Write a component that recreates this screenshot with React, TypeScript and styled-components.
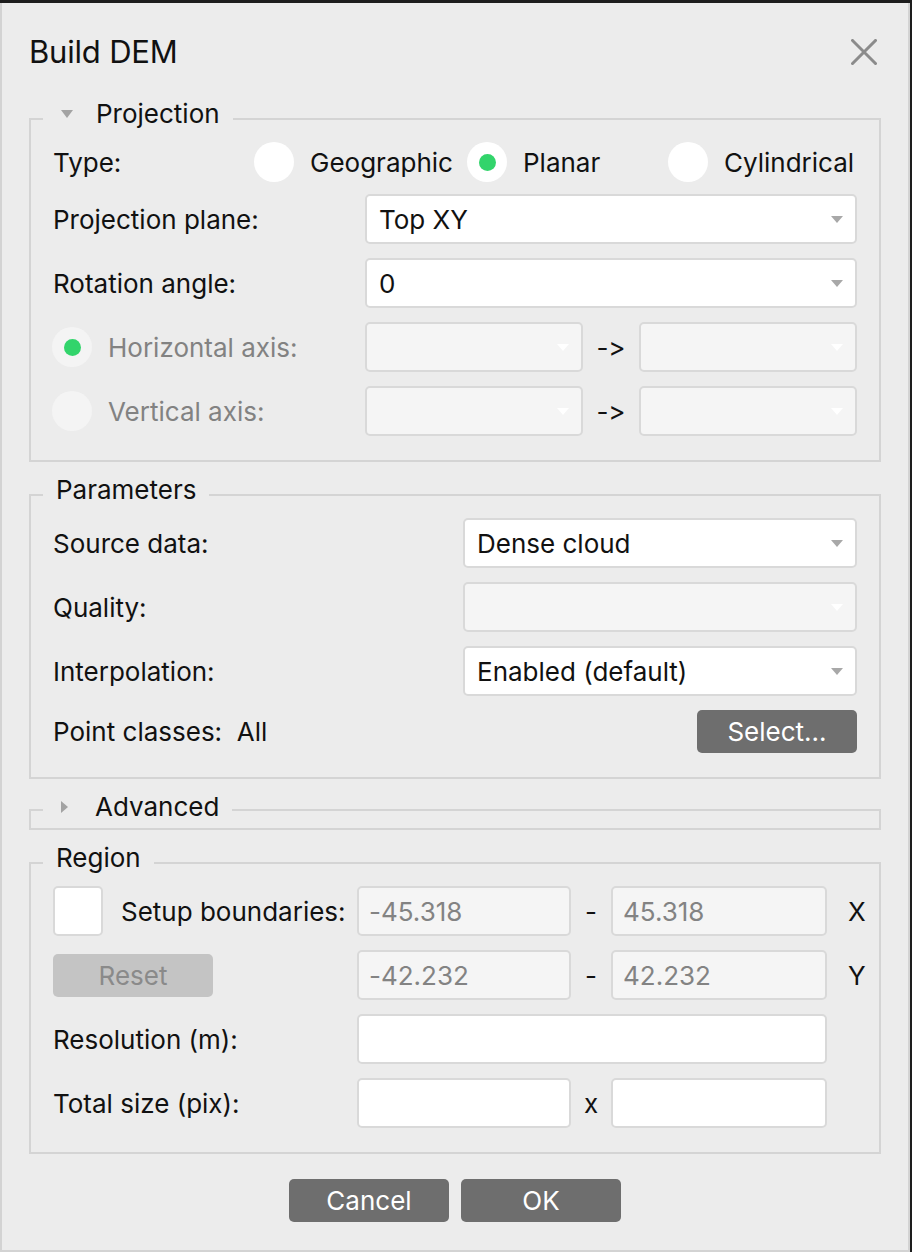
import { FunctionComponent } from "react"
import styled, { createGlobalStyle } from "styled-components"

const GlobalStyle = createGlobalStyle`
  html, body {
    margin: 0;
    padding: 0;
    background: #1d1d1d;
  }
  body {
    font-family: Inter, "Liberation Sans", sans-serif;
    font-feature-settings: "calt" 0, "liga" 0;
    -webkit-font-smoothing: antialiased;
  }
`

const Dialog = styled.div`
  box-sizing: border-box;
  width: 910px;
  margin-top: 3px;
  padding: 29px 27px 28px 27px;
  background: #ececec;
  border: 2px solid #d3d3d3;
  border-top: none;
  display: flex;
  flex-direction: column;
  gap: 13px;
  color: #111;
  font-size: 26px;
`

const Header = styled.div`
  height: 40px;
  margin-bottom: 14px;
  display: flex;
  align-items: center;
  justify-content: space-between;
`

const Title = styled.h1`
  margin: 0;
  font-size: 31px;
  font-weight: 400;
  line-height: 40px;
  letter-spacing: -0.2px;
`

const CloseButton = styled.button`
  border: none;
  background: none;
  padding: 0;
  margin-right: 4px;
  width: 26px;
  height: 26px;
  display: flex;
  cursor: pointer;
`

const Group = styled.fieldset`
  margin: 0;
  padding: 0 12px;
  border: 2px solid #d4d4d4;
  min-inline-size: 0;
`

const Legend = styled.legend<{ $collapsed?: boolean }>`
  padding: 0 13px ${p => (p.$collapsed ? "6px" : "10px")} 13px;
  line-height: 30px;
  font-size: 26px;
  display: flex;
  align-items: center;
`

const Arrow = styled.span<{ $open?: boolean }>`
  display: inline-block;
  width: 0;
  height: 0;
  margin-left: 5px;
  margin-right: ${p => (p.$open ? "23px" : "27px")};
  ${p =>
    p.$open
      ? `border-left: 6px solid transparent;
         border-right: 6px solid transparent;
         border-top: 8px solid #a3a3a3;`
      : `border-top: 6px solid transparent;
         border-bottom: 6px solid transparent;
         border-left: 7px solid #a3a3a3;`}
`

const Body = styled.div<{ $cols: string; $pt: number }>`
  display: grid;
  grid-template-columns: ${p => p.$cols};
  row-gap: 14px;
  align-items: center;
  padding: ${p => p.$pt}px 10px 24px 10px;
`

const Label = styled.span<{ $disabled?: boolean }>`
  color: ${p => (p.$disabled ? "#828282" : "#111")};
  white-space: nowrap;
`

const TypeRow = styled.div`
  grid-column: 1 / -1;
  height: 38px;
  display: grid;
  grid-template-columns: 201px 213px 201px 1fr;
  align-items: center;
`

const RadioItem = styled.label`
  display: flex;
  align-items: center;
  gap: 16px;
  white-space: nowrap;
`

const RadioCircle = styled.span<{ $checked?: boolean; $disabled?: boolean }>`
  flex: none;
  width: 40px;
  height: 40px;
  border-radius: 50%;
  background: ${p => (p.$disabled ? "#f4f4f4" : "#ffffff")};
  display: flex;
  align-items: center;
  justify-content: center;
  &::after {
    content: "";
    display: ${p => (p.$checked ? "block" : "none")};
    width: 17px;
    height: 17px;
    border-radius: 50%;
    background: #32d46b;
  }
`

const ComboBox = styled.div<{ $disabled?: boolean; $span?: string }>`
  box-sizing: border-box;
  grid-column: ${p => p.$span || "auto"};
  height: 50px;
  border: 2px solid #d9d9d9;
  border-radius: 5px;
  background: ${p => (p.$disabled ? "#f5f5f5" : "#ffffff")};
  display: flex;
  align-items: center;
  padding: 0 12px 0 12px;
  &::after {
    content: "";
    margin-left: auto;
    width: 0;
    height: 0;
    border-left: 6px solid transparent;
    border-right: 6px solid transparent;
    border-top: 7px solid ${p => (p.$disabled ? "#ffffff" : "#a8a8a8")};
  }
`

const TextField = styled.div<{ $disabled?: boolean; $span?: string }>`
  box-sizing: border-box;
  grid-column: ${p => p.$span || "auto"};
  height: 50px;
  border: 2px solid #d9d9d9;
  border-radius: 5px;
  background: ${p => (p.$disabled ? "#f5f5f5" : "#ffffff")};
  color: ${p => (p.$disabled ? "#838383" : "#111")};
  display: flex;
  align-items: center;
  padding: 0 10px;
`

const Sep = styled.span`
  text-align: center;
  white-space: nowrap;
`

const Axis = styled.span`
  padding-left: 21px;
`

const Button = styled.button<{ $disabled?: boolean }>`
  box-sizing: border-box;
  width: 160px;
  height: 43px;
  border: none;
  border-radius: 5px;
  background: ${p => (p.$disabled ? "#c4c4c4" : "#6e6e6e")};
  color: ${p => (p.$disabled ? "#8a8a8a" : "#ffffff")};
  font-family: inherit;
  font-feature-settings: inherit;
  font-size: 26px;
  padding: 0;
  cursor: pointer;
`

const ButtonCell = styled.div`
  display: flex;
  justify-content: flex-end;
  height: 43px;
`

const CheckBox = styled.span`
  box-sizing: border-box;
  flex: none;
  width: 50px;
  height: 50px;
  border: 2px solid #d9d9d9;
  border-radius: 5px;
  background: #ffffff;
`

const CheckRow = styled.label`
  display: flex;
  align-items: center;
  gap: 18px;
  white-space: nowrap;
`

const Footer = styled.div`
  display: flex;
  justify-content: center;
  gap: 12px;
  margin-top: 12px;
`

const App: FunctionComponent = () => {
  return (
    <>
      <GlobalStyle />
      <Dialog>
        <Header>
          <Title>Build DEM</Title>
          <CloseButton aria-label="Close">
            <svg width="26" height="26" viewBox="0 0 26 26">
              <path d="M1.5 1.5 L24.5 24.5 M24.5 1.5 L1.5 24.5" stroke="#8b8b8b" strokeWidth="3" strokeLinecap="square" />
            </svg>
          </CloseButton>
        </Header>

        <Group>
          <Legend>
            <Arrow $open />
            Projection
          </Legend>
          <Body $cols="312px 218px 56px 218px" $pt={3}>
            <TypeRow>
              <Label>Type:</Label>
              <RadioItem>
                <RadioCircle />
                Geographic
              </RadioItem>
              <RadioItem>
                <RadioCircle $checked />
                Planar
              </RadioItem>
              <RadioItem>
                <RadioCircle />
                Cylindrical
              </RadioItem>
            </TypeRow>

            <Label>Projection plane:</Label>
            <ComboBox $span="2 / 5">Top XY</ComboBox>

            <Label>Rotation angle:</Label>
            <ComboBox $span="2 / 5">0</ComboBox>

            <RadioItem style={{ marginLeft: -1 }}>
              <RadioCircle $checked $disabled />
              <Label $disabled>Horizontal axis:</Label>
            </RadioItem>
            <ComboBox $disabled />
            <Sep>-&gt;</Sep>
            <ComboBox $disabled />

            <RadioItem style={{ marginLeft: -1 }}>
              <RadioCircle $disabled />
              <Label $disabled>Vertical axis:</Label>
            </RadioItem>
            <ComboBox $disabled />
            <Sep>-&gt;</Sep>
            <ComboBox $disabled />
          </Body>
        </Group>

        <Group>
          <Legend>Parameters</Legend>
          <Body $cols="410px 1fr" $pt={3}>
            <Label>Source data:</Label>
            <ComboBox>Dense cloud</ComboBox>

            <Label>Quality:</Label>
            <ComboBox $disabled />

            <Label>Interpolation:</Label>
            <ComboBox>Enabled (default)</ComboBox>

            <Label>Point classes:&nbsp;&nbsp;All</Label>
            <ButtonCell>
              <Button>Select...</Button>
            </ButtonCell>
          </Body>
        </Group>

        <Group>
          <Legend $collapsed>
            <Arrow />
            Advanced
          </Legend>
        </Group>

        <Group>
          <Legend>Region</Legend>
          <Body $cols="304px 214px 40px 216px 30px" $pt={3}>
            <CheckRow>
              <CheckBox />
              Setup boundaries:
            </CheckRow>
            <TextField $disabled>-45.318</TextField>
            <Sep>-</Sep>
            <TextField $disabled>45.318</TextField>
            <Axis>X</Axis>

            <div>
              <Button $disabled>Reset</Button>
            </div>
            <TextField $disabled>-42.232</TextField>
            <Sep>-</Sep>
            <TextField $disabled>42.232</TextField>
            <Axis>Y</Axis>

            <Label>Resolution (m):</Label>
            <TextField $span="2 / 5" />
            <span />

            <Label>Total size (pix):</Label>
            <TextField />
            <Sep>x</Sep>
            <TextField />
            <span />
          </Body>
        </Group>

        <Footer>
          <Button>Cancel</Button>
          <Button>OK</Button>
        </Footer>
      </Dialog>
    </>
  )
}

export default App
